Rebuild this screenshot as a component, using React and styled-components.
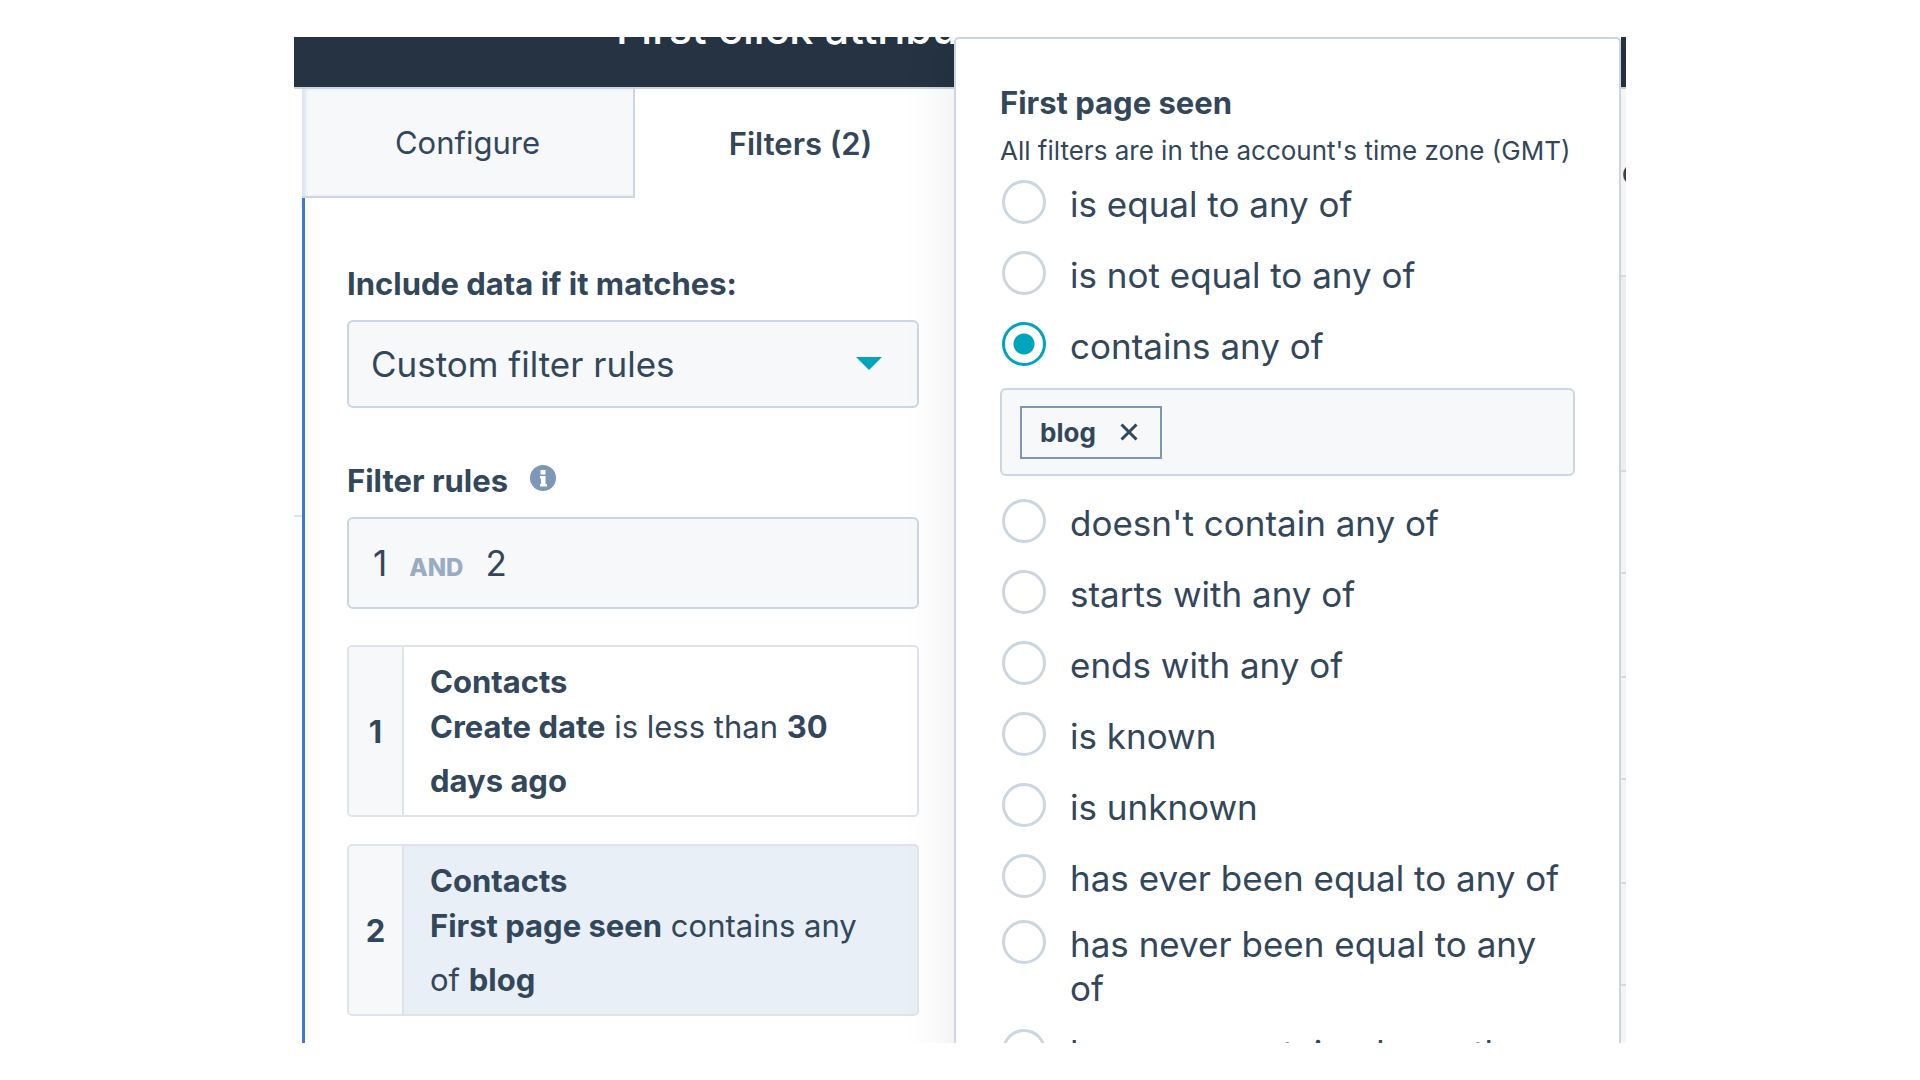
import React, { useState } from "react";
import styled, { createGlobalStyle, css } from "styled-components";

const color = {
  ink: "#33475b",
  navy: "#253342",
  line: "#cbd6e2",
  cardLine: "#dfe3eb",
  field: "#f6f8fa",
  selected: "#e8eff6",
  teal: "#00a4bd",
  steel: "#7c98b6",
  muted: "#99acc2",
  focus: "#3b78d8",
};

const GlobalStyle = createGlobalStyle`
  * { box-sizing: border-box; }
  body {
    margin: 0;
    background: #fff;
    color: ${color.ink};
    font-family: Inter, "Open Sans", sans-serif;
  }
  button, input, select { font: inherit; color: inherit; }
`;

const Page = styled.div`
  height: 100vh;
  padding: 37px 294px;
`;

const Frame = styled.main`
  display: grid;
  grid-template-columns: minmax(0, 660fr) minmax(0, 667fr) 5px;
  height: 100%;
  overflow: hidden;
`;

const Editor = styled.section`
  display: flex;
  flex-direction: column;
  min-width: 0;
  overflow: hidden;
`;

const TopBar = styled.header`
  flex: none;
  height: 52px;
  overflow: hidden;
  background: ${color.navy};
  border-bottom: 2px solid ${color.line};
`;

const Title = styled.h1`
  margin: -34px 0 0 322px;
  color: #fff;
  font-size: 43px;
  font-weight: 500;
  line-height: 50px;
  white-space: nowrap;
`;

const EditorBody = styled.div`
  flex: 1;
  display: flex;
  min-height: 0;
`;

const Gutter = styled.div`
  flex: none;
  width: 8px;
  height: 428px;
  border-bottom: 2px solid ${color.cardLine};
`;

const Sidebar = styled.div`
  flex: 1;
  display: flex;
  flex-direction: column;
  min-width: 0;
`;

const Tabs = styled.div`
  display: flex;
  margin-right: -12px;
`;

const Tab = styled.button`
  flex: 1 1 0;
  height: 109px;
  padding: 0;
  border: 0;
  background: #fff;
  font-size: 31px;
  font-weight: 600;
  cursor: pointer;
  ${(p) =>
    !p.$active &&
    css`
      background: ${color.field};
      border: solid ${color.line};
      border-width: 0 2px 2px 0;
      box-shadow: inset 4px 0 3px #dfe5ee;
      font-weight: 400;
    `}
`;

const Form = styled.form`
  flex: 1;
  padding: 66px 35px 0 42px;
  border-left: 3px solid ${color.focus};
`;

const FieldLabel = styled.label`
  display: flex;
  gap: 22px;
  margin-bottom: 16px;
  font-size: 31px;
  font-weight: 700;
  line-height: 40px;
`;

const InfoMark = styled.svg`
  margin-top: 4px;
`;

const SelectWrap = styled.div`
  position: relative;
  margin-bottom: 53px;
`;

const Select = styled.select`
  display: block;
  width: 100%;
  height: 88px;
  padding: 0 60px 0 22px;
  appearance: none;
  background: ${color.field};
  border: 2px solid ${color.line};
  border-radius: 6px;
  font-size: 35px;
`;

const Caret = styled.svg`
  position: absolute;
  top: 37px;
  right: 37px;
  pointer-events: none;
`;

const RuleLogic = styled.output`
  display: flex;
  align-items: baseline;
  gap: 22px;
  height: 92px;
  margin-bottom: 36px;
  padding: 0 24px;
  background: ${color.field};
  border: 2px solid ${color.line};
  border-radius: 6px;
  font-size: 35px;
  line-height: 88px;
`;

const Operator = styled.span`
  color: ${color.muted};
  font-size: 24px;
  font-weight: 800;
`;

const RuleList = styled.div`
  display: grid;
  gap: 27px;
`;

const RuleCard = styled.article`
  display: grid;
  grid-template-columns: 55px minmax(0, 1fr);
  overflow: hidden;
  background: ${(p) => (p.$selected ? color.selected : "#fff")};
  border: 2px solid ${color.cardLine};
  border-radius: 5px;
  font-size: 31px;
`;

const RuleIndex = styled.div`
  display: flex;
  align-items: center;
  justify-content: center;
  background: ${color.field};
  border-right: 2px solid ${color.cardLine};
  font-weight: 700;
`;

const RuleBody = styled.div`
  padding: 17px 28px 7px 26px;
`;

const RuleObject = styled.div`
  font-weight: 700;
  line-height: 36px;
`;

const RuleText = styled.p`
  margin: 0;
  line-height: 54px;
`;

const Panel = styled.aside`
  position: relative;
  z-index: 1;
  min-width: 0;
  padding: 46px 44px 0;
  background: #fff;
  border: 2px solid ${color.line};
  border-bottom: 0;
  border-radius: 5px 5px 0 0;
  box-shadow: 0 0 54px rgba(0, 0, 0, 0.09);
`;

const PanelTitle = styled.h2`
  margin: 0 0 12px;
  font-size: 31px;
  font-weight: 700;
  line-height: 36px;
`;

const PanelNote = styled.p`
  margin: 0 0 11px;
  font-size: 26px;
  line-height: 36px;
  white-space: nowrap;
`;

const Option = styled.label`
  display: flex;
  align-items: flex-start;
  gap: 24px;
  min-height: 47px;
  margin: 0 0 ${(p) => (p.$tight ? 19 : 24)}px 2px;
  cursor: pointer;
`;

const Radio = styled.input`
  flex: none;
  width: 44px;
  height: 44px;
  margin: 0;
  appearance: none;
  border: 3px solid ${color.line};
  border-radius: 50%;
  &:checked {
    border-color: ${color.teal};
    background: radial-gradient(circle, ${color.teal} 10px, transparent 11px);
  }
`;

const OptionText = styled.span`
  padding-top: 2px;
  font-size: 35px;
  line-height: 44px;
`;

const TagField = styled.div`
  display: flex;
  align-items: center;
  height: 88px;
  margin-bottom: 23px;
  padding: 0 18px;
  background: ${color.field};
  border: 2px solid ${color.line};
  border-radius: 6px;
`;

const Tag = styled.span`
  display: flex;
  align-items: center;
  gap: 24px;
  height: 53px;
  padding: 0 22px 0 18px;
  border: 2px solid ${color.steel};
  font-size: 26px;
  font-weight: 700;
`;

const RemoveTag = styled.button`
  display: flex;
  padding: 0;
  background: none;
  border: 0;
  cursor: pointer;
`;

const TagInput = styled.input`
  flex: 1;
  min-width: 0;
  background: none;
  border: 0;
  outline: 0;
`;

const Report = styled.section`
  min-width: 0;
  overflow: hidden;
`;

const ReportRow = styled.div`
  height: ${(p) => p.$height}px;
  padding: 70px 0 0 1px;
  background: ${(p) => (p.$shaded ? color.field : "#fff")};
  border-bottom: 2px solid ${color.cardLine};
  font-size: 26px;
  font-weight: 700;
`;

const InfoIcon = () => (
  <InfoMark width="26" height="26" viewBox="0 0 26 26" aria-hidden="true">
    <circle cx="13" cy="13" r="13" fill={color.steel} />
    <path d="M10.500 5h5v4.500h-5zM10 11h5.500v8h1.500v2.500H10V19h1v-5.500h-1z" fill="#fff" />
  </InfoMark>
);

const CloseIcon = () => (
  <svg width="18" height="18" viewBox="0 0 18 18" aria-hidden="true">
    <path d="M1.500 1.500l15 15M16.500 1.500l-15 15" stroke={color.ink} strokeWidth="3" fill="none" />
  </svg>
);

const before = [
  { text: "is equal to any of" },
  { text: "is not equal to any of" },
  { text: "contains any of", tight: true },
];

const after = [
  { text: "doesn't contain any of" },
  { text: "starts with any of" },
  { text: "ends with any of" },
  { text: "is known" },
  { text: "is unknown" },
  { text: "has ever been equal to any of", tight: true },
  { text: "has never been equal to any of", tight: true },
  { text: "has ever contained exactly" },
];

const reportRows = [195, 102, 104, 102, 104, 102];

export default function App() {
  const [choice, setChoice] = useState("contains any of");

  const renderOption = ({ text, tight }) => (
    <Option key={text} $tight={tight}>
      <Radio
        type="radio"
        name="operator"
        checked={choice === text}
        onChange={() => setChoice(text)}
      />
      <OptionText>{text}</OptionText>
    </Option>
  );

  return (
    <Page>
      <GlobalStyle />
      <Frame>
        <Editor>
          <TopBar>
            <Title>First click attribution</Title>
          </TopBar>
          <EditorBody>
            <Gutter />
            <Sidebar>
              <Tabs role="tablist">
                <Tab type="button" role="tab" aria-selected="false">
                  Configure
                </Tab>
                <Tab type="button" role="tab" aria-selected="true" $active>
                  Filters (2)
                </Tab>
              </Tabs>
              <Form>
                <FieldLabel htmlFor="match">Include data if it matches:</FieldLabel>
                <SelectWrap>
                  <Select id="match">
                    <option>Custom filter rules</option>
                  </Select>
                  <Caret width="26" height="13" viewBox="0 0 26 13" aria-hidden="true">
                    <path d="M0 0h26L13 13z" fill={color.teal} />
                  </Caret>
                </SelectWrap>
                <FieldLabel htmlFor="logic">
                  Filter rules
                  <InfoIcon />
                </FieldLabel>
                <RuleLogic id="logic">
                  <span>1</span>
                  <Operator>AND</Operator>
                  <span>2</span>
                </RuleLogic>
                <RuleList>
                  <RuleCard>
                    <RuleIndex>1</RuleIndex>
                    <RuleBody>
                      <RuleObject>Contacts</RuleObject>
                      <RuleText>
                        <b>Create date</b> is less than <b>30 days ago</b>
                      </RuleText>
                    </RuleBody>
                  </RuleCard>
                  <RuleCard $selected>
                    <RuleIndex>2</RuleIndex>
                    <RuleBody>
                      <RuleObject>Contacts</RuleObject>
                      <RuleText>
                        <b>First page seen</b> contains any of <b>blog</b>
                      </RuleText>
                    </RuleBody>
                  </RuleCard>
                </RuleList>
              </Form>
            </Sidebar>
          </EditorBody>
        </Editor>

        <Panel>
          <PanelTitle>First page seen</PanelTitle>
          <PanelNote>All filters are in the account's time zone (GMT)</PanelNote>
          {before.map(renderOption)}
          <TagField>
            <Tag>
              blog
              <RemoveTag type="button" aria-label="Remove blog">
                <CloseIcon />
              </RemoveTag>
            </Tag>
            <TagInput aria-label="Add a value" />
          </TagField>
          {after.map(renderOption)}
        </Panel>

        <Report>
          <TopBar />
          <ReportRow $height={188}>C</ReportRow>
          {reportRows.map((height, i) => (
            <ReportRow key={i} $height={height} $shaded={i === 0} />
          ))}
        </Report>
      </Frame>
    </Page>
  );
}
